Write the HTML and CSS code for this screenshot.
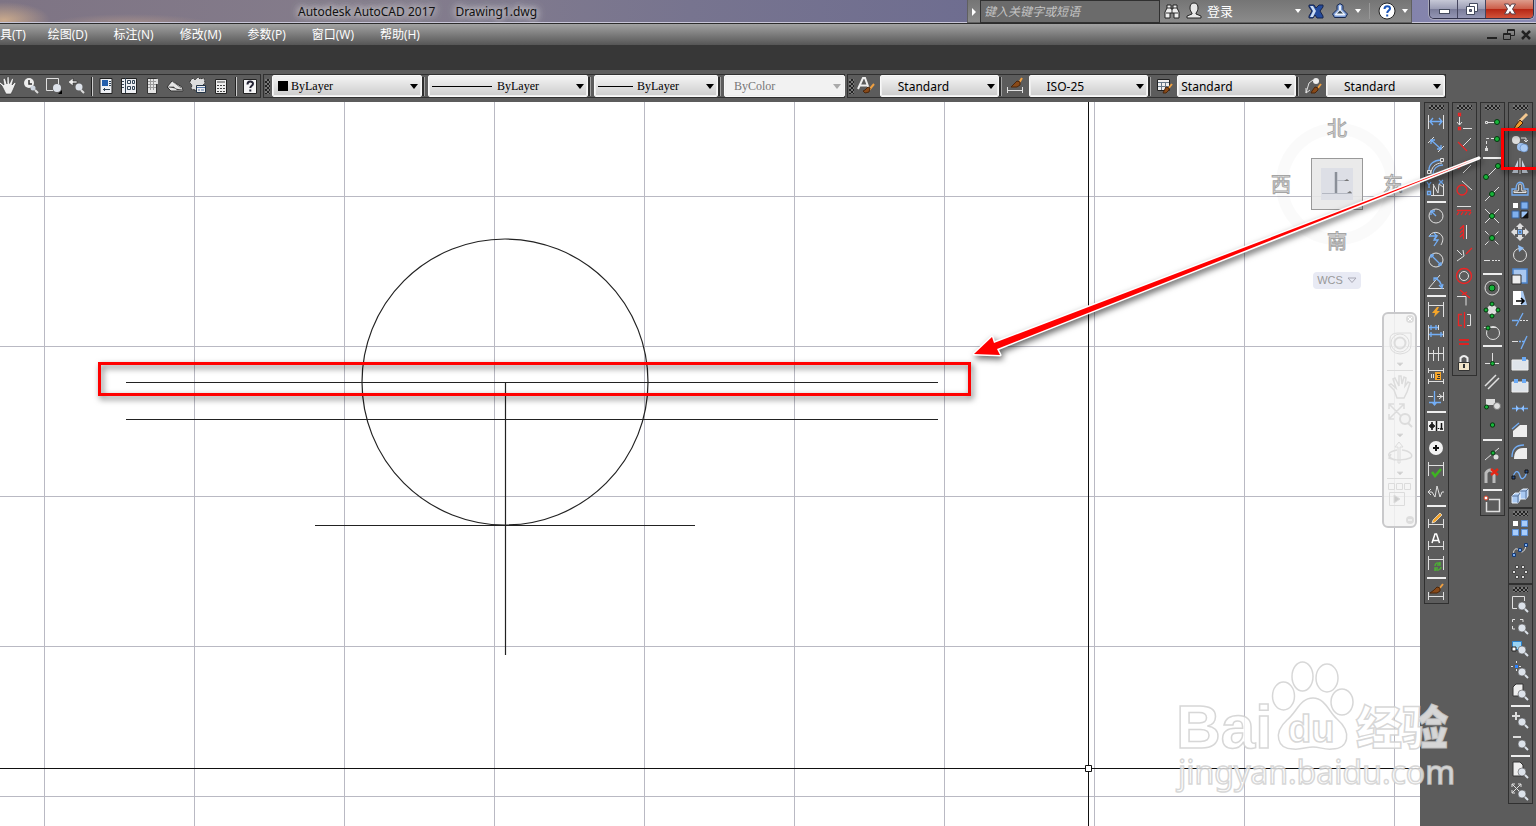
FILE: index.html
```html
<!DOCTYPE html>
<html lang="zh-CN">
<head>
<meta charset="utf-8">
<title>Autodesk AutoCAD 2017 - Drawing1.dwg</title>
<link rel="stylesheet" href="styles.css">
</head>
<body>
<div class="app">
<header class="titlebar">
  <h1 class="title"><span>Autodesk AutoCAD 2017</span><span>Drawing1.dwg</span></h1>
  <div class="infocenter">
    <button class="info-toggle" aria-label="展开"><svg width="12" height="22"><path d="M4 8v8l4-4z" fill="#fff"/></svg></button>
    <input class="search" type="text" aria-label="搜索" placeholder="键入关键字或短语">
    <button class="info-btn" aria-label="查找"><svg width="18" height="18" viewBox="0 0 18 18"><path d="M4 3h4v4h2V3h4v3l2 4v6h-5v-5H7v5H2v-6l2-4z" fill="#eee" stroke="#222"/><path d="M4 6h4M10 6h4M3 11h4M11 11h4M9 7v4" stroke="#333"/></svg></button>
    <button class="info-btn login" aria-label="登录"><svg width="18" height="18" viewBox="0 0 18 18"><path d="M9 1c3 0 4 2 4 5 0 2-1 4-2 5v1l5 2v2H2v-2l5-2v-1C6 10 5 8 5 6c0-3 1-5 4-5z" fill="#e8e8e8" stroke="#222"/></svg><span>登录</span></button>
    <button class="info-btn narrow" aria-label="登录选项"><svg width="6" height="4"><path d="M0 0h6L3 4z" fill="#fff"/></svg></button>
    <button class="info-btn" aria-label="Exchange"><svg width="18" height="18" viewBox="0 0 18 18"><path d="M2 3h5l2 3 3-3h4v2l-3 4 3 5v2h-6l-2-3-2 3H2v-2l3-5-3-4z" fill="#234a9c" stroke="#17244d"/><path d="M3 4h3l3 5-3 6H3l3-6z" fill="#cbdcf4"/></svg></button>
    <button class="info-btn" aria-label="Autodesk 360"><svg width="18" height="18" viewBox="0 0 18 18"><path d="M9 1.500l3 2v4l4.500 4.500-2 3.500h-11l-2-3.500L6 7.500v-4z" fill="#7a9ad4" stroke="#18294e"/><path d="M8 3.500h2V8l4.500 4.500-1 1h-9l-1-1L8 8z" fill="#e9f0fa"/><path d="M9 8.500l3 3H6z" fill="#345"/></svg></button>
    <button class="info-btn narrow" aria-label="Autodesk 360 选项"><svg width="6" height="4"><path d="M0 0h6L3 4z" fill="#fff"/></svg></button>
    <span class="info-div"></span>
    <button class="info-btn" aria-label="帮助"><svg width="18" height="18" viewBox="0 0 18 18"><circle cx="9" cy="9" r="8" fill="#fff" stroke="#222"/><path d="M6.500 7c0-4 5.500-3.500 5.500-.5C12 8.500 9.200 8.500 9.200 11M9.200 12.500v2" stroke="#1c56b8" stroke-width="2" fill="none"/></svg></button>
    <button class="info-btn narrow" aria-label="帮助选项"><svg width="6" height="4"><path d="M0 0h6L3 4z" fill="#fff"/></svg></button>
  </div>
  <div class="winbtns">
    <button aria-label="最小化"><svg width="14" height="14"><rect x="2.500" y="7.500" width="10" height="4" fill="#fff" stroke="#444a5e"/></svg></button>
    <button aria-label="还原"><svg width="14" height="14"><path d="M4.500 1.500h8v8h-8z" fill="#fff" stroke="#444a5e"/><path d="M1.500 4.500h8v8h-8z" fill="#fff" stroke="#444a5e"/><path d="M4.500 7.500h2v2h-2z" fill="#778" stroke="#444a5e"/></svg></button>
    <button class="close" aria-label="关闭"><svg width="14" height="14"><path d="M1.500 2h4L7 4.500 8.500 2h4L9.500 7l3 5h-4L7 9.500 5.500 12h-4l3-5z" fill="#fff" stroke="#5a4048"/></svg></button>
  </div>
</header>
<nav class="menubar">
  <div class="menus">
    <button class="first">具(T)</button><button>绘图(D)</button><button>标注(N)</button><button>修改(M)</button><button>参数(P)</button><button>窗口(W)</button><button>帮助(H)</button>
  </div>
  <div class="docbtns">
    <button aria-label="最小化图形"><svg width="12" height="12"><path d="M1 8h10v2H1z" fill="#222"/></svg></button>
    <button aria-label="还原图形"><svg width="12" height="12"><path d="M4.500 4V.5h7v6H8M.5 4.500h7v6h-7z" fill="none" stroke="#222"/><path d="M4 1.500h8M0 5.500h8" stroke="#222"/></svg></button>
    <button aria-label="关闭图形"><svg width="12" height="12"><path d="M2 2l8 8M10 2l-8 8" stroke="#222" stroke-width="2.500"/></svg></button>
  </div>
</nav>
<div class="ribbon"></div>
<div class="toolbars">
  <div class="bar bar-std">
    <button class="tool" aria-label="平移"><svg class="ic"><path d="M4 10L1 7l1-1 4 3L5 3l2-1 2 6V1l2-.5.5 7L14 2l1.500 1L14 9l3-3 1 1-3 7-2 4H8z" fill="#eee" stroke="#333" stroke-width=".6"/></svg></button>
    <button class="tool" aria-label="实时缩放"><svg class="ic"><circle cx="8" cy="7" r="5" fill="#eee"/><path d="M8 4v4h3" stroke="#333" fill="none" stroke-width="1.500"/><circle cx="12" cy="12" r="2.500" fill="#cdd5e0"/><path d="M14 14l3 3" stroke="#ddd" stroke-width="2"/></svg></button>
    <button class="tool" aria-label="窗口缩放"><svg class="ic"><path class="w" d="M9 14.500H2.500V2.500h12V8"/><circle cx="13" cy="12" r="4" fill="#dde2ea"/><path d="M14 18l4-4v4z" fill="#000"/></svg></button>
    <button class="tool" aria-label="缩放上一个"><svg class="ic"><path d="M1 6l5-4v3h4v2H6v3z" fill="#eee" stroke="#333" stroke-width=".6"/><circle cx="12" cy="11" r="3.500" fill="#dde2ea"/><path d="M14 14l3 3" stroke="#ddd" stroke-width="2"/></svg></button>
    <i class="vsep"></i>
    <button class="tool" aria-label="特性"><svg class="ic"><path d="M4 2.500h12v15H4z" fill="#eef0f4" stroke="#222"/><path d="M6 4h6v6H6z" fill="#235eab"/><path d="M13 5.500h2M13 7.500h2M13 9.500h2M7 13.500h7M8.500 12v3" stroke="#345"/></svg></button>
    <button class="tool" aria-label="设计中心"><svg class="ic"><path d="M2.500 2.500h15v15h-15z" fill="#eef0f4" stroke="#222"/><path d="M6.500 2v15M3 5.500h2M3 8.500h2M3 11.500h2" stroke="#345"/><path class="k" d="M8.500 4.500h3v3h-3zM13.500 4.500h2v3h-2zM8.500 10.500h3v3h-3zM13.500 10.500h2v3h-2z"/></svg></button>
    <button class="tool" aria-label="工具选项板"><svg class="ic"><path d="M5.500 2.500h9v15h-9z" fill="#e4e4e4" stroke="#333"/><path d="M6 5.500h8M6 8.500h8M6 11.500h8M8.500 3v11M11.500 3v11" stroke="#999"/><path d="M14 3h2v5h-2z" fill="#ddd"/></svg></button>
    <button class="tool" aria-label="图纸集"><svg class="ic"><path d="M2 11L7 5l10 6 1 4H6z" fill="#e4e4e4" stroke="#333"/><path d="M3 11h6l3 3h6M7 5l9 7" stroke="#777"/></svg></button>
    <button class="tool" aria-label="标记集"><svg class="ic"><path d="M2 5l3-3 2 2 3-3 2 2 4-1 1 5-2 2v5H7l-4-1 1-4-2-2z" fill="#ddd" stroke="#333" stroke-dasharray="2 1"/><path d="M8.500 9.500h9v7h-9z" fill="#eee" stroke="#234"/><path d="M9 11.500h8M10 14h2M13 14h3" stroke="#57a"/></svg></button>
    <button class="tool" aria-label="计算器"><svg class="ic"><path d="M4.500 3.500h11v14h-11z" fill="#eee" stroke="#222"/><path d="M6 6h8M6 9.500h2M9 9.500h2M12 9.500h2M6 12.500h2M9 12.500h2M12 12.500h2M6 15.500h2M9 15.500h2M12 15.500h2" stroke="#444"/></svg></button>
    <i class="vsep"></i>
    <button class="tool" aria-label="帮助主题"><svg class="ic"><path d="M3.500 3.500h13v14h-13z" fill="#f4f4f6" stroke="#222"/><path d="M7.500 8.500c0-4 5.500-3.500 5.500-.8 0 2-2.700 2-2.700 4.300M10.300 13.500v2" fill="none" stroke="#223" stroke-width="2"/></svg></button>
  </div>
  <div class="bar bar-props">
    <i class="vgrip"></i>
    <div class="combo c150"><select class="swatch" aria-label="颜色"><option>ByLayer</option></select><i class="chip"></i></div>
    <i class="vsep"></i>
    <div class="combo c160"><select class="serif l1" aria-label="线型"><option>ByLayer</option></select><i class="stroke s60"></i></div>
    <i class="vsep"></i>
    <div class="combo c124"><select class="serif l2" aria-label="线宽"><option>ByLayer</option></select><i class="stroke s35"></i></div>
    <i class="vsep"></i>
    <div class="combo c120 off"><select class="serif" aria-label="打印样式" disabled><option>ByColor</option></select></div>
  </div>
  <div class="bar bar-styles">
    <i class="vgrip"></i>
    <button class="tool" aria-label="文字样式"><svg class="ic"><path d="M2 13L7 2h2l4 11M4 9.500h7" fill="none" stroke="#eee" stroke-width="2"/><path d="M18 8l-5 6" stroke="#f0a040" stroke-width="2"/><path d="M14 12l-2-1-3 3-2 1 2 2 4-1z" fill="#8a4a18" stroke="#4b260b"/></svg></button>
    <div class="combo c118"><select class="indent" aria-label="文字样式列表"><option>Standard</option></select></div>
    <i class="vsep"></i>
    <button class="tool" aria-label="标注样式"><svg class="ic"><path class="w" d="M2.500 11v6M17.500 11v6M3 14.500h14"/><path d="M17 2l-3 5" stroke="#f0a040" stroke-width="2"/><path d="M15 6l-3-1-3 3-3 3h6l3-2z" fill="#8a4a18" stroke="#4b260b"/></svg></button>
    <div class="combo c118"><select class="indent" aria-label="标注样式列表"><option>ISO-25</option></select></div>
    <i class="vsep"></i>
    <button class="tool" aria-label="表格样式"><svg class="ic"><path d="M3.500 3.500h12v11h-12z" fill="#eee" stroke="#222"/><path d="M4 6.500h11M4 10.500h11M7.500 6v8M11.500 6v8" stroke="#678"/><path d="M18 8l-4 5" stroke="#f0a040" stroke-width="2"/><path d="M15 12l-3-1-2 4-1 2h3l3-3z" fill="#8a4a18" stroke="#4b260b"/></svg></button>
    <div class="combo c118"><select aria-label="表格样式列表"><option>Standard</option></select></div>
    <i class="vsep"></i>
    <button class="tool" aria-label="多重引线样式"><svg class="ic"><path class="w" d="M3 17L6 7l4-3M3 12v5l4-3"/><circle cx="13" cy="5" r="3" fill="#eee"/><path d="M18 8l-4 5" stroke="#f0a040" stroke-width="2"/><path d="M15 12l-3-1-3 4-1 2h4l3-3z" fill="#8a4a18" stroke="#4b260b"/></svg></button>
    <div class="combo c118"><select class="indent" aria-label="多重引线样式列表"><option>Standard</option></select></div>
  </div>
</div>
<main class="workspace">
  <section class="canvas" aria-label="绘图区">
    <svg class="drawing">
      <defs><pattern id="grid" x="44" y="94" width="150" height="150" patternUnits="userSpaceOnUse"><path d="M.5 0v150M0 .5h150" stroke="#b9b9c3"/></pattern></defs>
      <rect width="100%" height="100%" fill="url(#grid)"/>
      <g fill="none" stroke="#222" stroke-width="1.200">
        <circle cx="505" cy="280" r="143"/>
        <path d="M126 280.500h812M126 317.500h812M315 423.500h380M505.500 280v273"/>
      </g>
      <path d="M1088.500 0V663M1088.500 670V900M0 666.500h1085M1092 666.500h900M1085.500 663.500h6v6h-6z" fill="none" stroke="#111"/>
    </svg>
    <div class="viewcube">
      <svg width="140" height="140" viewBox="0 0 140 140">
        <circle cx="70" cy="70" r="55" fill="none" stroke="#000" stroke-opacity=".02" stroke-width="12"/>
        <rect x="44.500" y="44.500" width="51" height="51" fill="#e8e8e8" fill-opacity=".9" stroke="#999"/>
        <rect x="54" y="54" width="32" height="32" fill="#dddfe6"/>
        <path d="M69 58v21" stroke="#8a8f98" stroke-width="2.500"/><path d="M55 79.500h30M70 66.500h12" stroke="#b4b8c2"/><path d="M77 67l3-2 2 2zM80 79l3-2 2 2z" fill="#777"/>
        <g class="compass"><text x="70" y="22">北</text><text x="14" y="78">西</text><text x="126" y="78">东</text><text x="70" y="135">南</text></g>
      </svg>
      <button class="wcs">WCS <svg width="10" height="7"><path d="M1 1h8L5 5.500z" fill="none" stroke="#a8a8b4"/></svg></button>
    </div>
    <div class="navbar">
      <svg width="32" height="212" viewBox="0 0 32 212" fill="none" stroke="#dcdcdc">
        <circle cx="26" cy="5" r="4" fill="#ddd" stroke="none"/><path d="M24 3l4 4M28 3l-4 4" stroke="#fff"/>
        <path d="M6 25q0-6 8-6h13v12q0 8-11 9-10-1-10-9z"/><circle cx="16" cy="29" r="5.500" stroke-width="2"/><circle cx="16" cy="29" r="9"/>
        <path d="M13 49h6l-3 3z" fill="#ccc"/><path d="M3 56.500h26"/>
        <path d="M10 76l-5-5 2-1 5 4-3-9 2-1 4 8V62h2l1 8 2-7 2 1-1 8 3-4 2 1-3 9-3 6h-7z" stroke-width="1.500"/>
        <path d="M5 90l15 15M20 90l-15 15M5 95v-5h5M15 90h5v5M5 100v5h5" stroke-width="1.500"/><circle cx="21" cy="105" r="5" fill="#f3f3f3" stroke-width="2"/><path d="M24 109l4 4" stroke-width="2"/><path d="M13 120h6l-3 3z" fill="#ccc"/>
        <path d="M14 149v-16h-3l4-5 4 5h-3v16z"/><path d="M13 136c-9 2-10 5-6 8s15 2 19 0 1-7-8-8M7 140l-2 4 6 2" stroke-width="1.500"/>
        <path d="M13 158h6l-3 3z" fill="#ccc"/><path d="M3 164.500h26M4.500 169.500h6v6h-6zM12.500 169.500h6v6h-6zM20.500 169.500h6v6h-6zM5.500 178.500h15v13h-15z"/><path d="M10 181v8l6-4z" fill="#ccc"/>
        <circle cx="26" cy="206" r="4" fill="#ddd" stroke="none"/><path d="M24 206h4" stroke="#fff"/>
      </svg>
    </div>
  </section>
  <aside class="dock">
    <div class="dockcol"><div class="palette"><i class="hgrip"></i>
      <button class="tool" aria-label="线性标注"><svg class="ic"><path class="w" d="M2.500 3v14M17.500 3v14"/><path class="b" d="M4 9.500h12M7 6L4 9.500 7 13M13 6l3 3.500L13 13"/></svg></button>
      <button class="tool" aria-label="对齐标注"><svg class="ic"><path class="w" d="M2 9l6-6M12 18l6-6"/><path class="b" d="M5 6l10 9M5 10V6h4M11 15h4v-4"/></svg></button>
      <button class="tool" aria-label="弧长标注"><svg class="ic"><path class="b" d="M3 14C3 8 8 4 15 4M7 18c0-5 4-9 10-9"/><path class="w" d="M1.500 14.500h3v3h-3zM14.500 2.500h3v3h-3zM5 18C5 12 9 7 16 7"/></svg></button>
      <button class="tool" aria-label="坐标标注"><svg class="ic"><path class="w" d="M7.500 6v11M17.500 6v11M5 17.500h13M7 6l5 9 1-9 4 3"/><path class="b" d="M1 4l2 3 2-3M3 7v3M13 2l4 4M17 2l-4 4M1.500 13.500h3v3h-3z"/></svg></button>
      <i class="hsep"></i>
      <button class="tool" aria-label="半径标注"><svg class="ic"><circle class="w" cx="10" cy="10" r="7"/><path class="b" d="M5 5l5 5M5 9V5h4"/></svg></button>
      <button class="tool" aria-label="折弯标注"><svg class="ic"><path class="w" d="M3 9C5 3 13 3 16 8c2 3 0 7-1 9"/><path class="b" d="M3 8h8l-3 4h4l-4 6M8 5l3 3-3 3"/></svg></button>
      <button class="tool" aria-label="直径标注"><svg class="ic"><circle class="w" cx="10" cy="10" r="7"/><path class="b" d="M5 5l10 10M5 8V5h3M12 15h3v-3"/></svg></button>
      <button class="tool" aria-label="角度标注"><svg class="ic"><path class="w" d="M14 3L2.500 16.500H18"/><path class="b" d="M8 6c5 1 7 4 8 10M8 9V6h4M13 13l3 3 1-4"/></svg></button>
      <i class="hsep"></i>
      <button class="tool" aria-label="快速标注"><svg class="ic"><path class="w" d="M2.500 2v15M17.500 2v15M3 5.500h14"/><path d="M11 7l-5 6h3l-1 4 6-6h-3l2-4z" fill="#f5a52a"/></svg></button>
      <button class="tool" aria-label="基线标注"><svg class="ic"><path class="w" d="M2.500 3v15M12.500 3v5M17.500 9v6"/><path class="b" d="M3 5.500h9M3 12.500h14M5 3v5M10 3v5M5 10v5M15 10v5"/></svg></button>
      <button class="tool" aria-label="连续标注"><svg class="ic"><path class="w" d="M2.500 3v14M7.500 6v11M12.500 3v14M17.500 3v14M3 9.500h14"/></svg></button>
      <button class="tool" aria-label="等距标注"><svg class="ic"><path class="w" d="M2.500 2v5M17.500 2v5M3 4.500h14M2.500 13v5M17.500 13v5M3 15.500h14M5.500 8v4M7.500 8v4"/><path d="M9 6h6v8H9z" fill="#f5a52a"/><path d="M11 8.500h3M12 10.500h2M11 12.500h3" stroke="#333"/></svg></button>
      <button class="tool" aria-label="折断标注"><svg class="ic"><path class="w" d="M2 8.500h5M11 8.500h6M13 6l3 2.500-3 2.500M17.500 4v9"/><path class="b" d="M8.500 3v14M3 14.500h12M6 14l2.500 3 2.500-3"/></svg></button>
      <i class="hsep"></i>
      <button class="tool" aria-label="公差"><svg class="ic"><path d="M2 5h16v10H2z" fill="#eee"/><path d="M10.500 5v10M6 6v8M3 10h6M15.500 7v6M14 13h3M12.500 12v1" stroke="#111" stroke-width="1.500"/><circle cx="6" cy="10" r="2" stroke="#111" fill="none"/></svg></button>
      <button class="tool" aria-label="圆心标记"><svg class="ic"><circle cx="10" cy="10" r="7" fill="#f2f2f2"/><path d="M7 10h6M10 7v6" stroke="#111" stroke-width="2"/></svg></button>
      <button class="tool" aria-label="检验"><svg class="ic"><path class="w" d="M2.500 2v14M17.500 2v14M3 5.500h14"/><path d="M6 12l3 4 6-7" fill="none" stroke="#3db521" stroke-width="2.500"/></svg></button>
      <button class="tool" aria-label="折弯线性"><svg class="ic"><path class="w" d="M2 10h4l3 5 2-11 3 11 2-5h2M5 7l-3 3 3 3"/></svg></button>
      <i class="hsep"></i>
      <button class="tool" aria-label="编辑标注"><svg class="ic"><path class="w" d="M2.500 9v9M17.500 9v9M3 14.500h14"/><path d="M7 10l7-7 2 2-7 7-3 1z" fill="#f5a52a" stroke="#fff" stroke-width=".6"/></svg></button>
      <button class="tool" aria-label="编辑标注文字"><svg class="ic"><path class="w" d="M2.500 9v9M17.500 9v9M3 14.500h14"/><path d="M6 11l3-9h1.500l3 9M7 8.500h6" fill="none" stroke="#fff" stroke-width="1.500"/></svg></button>
      <button class="tool" aria-label="标注更新"><svg class="ic"><path class="w" d="M2.500 2v14M17.500 2v14M3 5.500h14"/><path d="M14 10c-2-2-5-1-5 2M9 15c2 2 6 1 6-2M14 8v3h-3M9 17v-3h3" fill="none" stroke="#4caf35" stroke-width="1.500"/></svg></button>
      <i class="hsep"></i>
      <button class="tool" aria-label="标注样式管理"><svg class="ic"><path class="w" d="M2.500 10v8M17.500 10v8M3 14.500h14"/><path d="M17 2l-4 5" stroke="#f0a040" stroke-width="2"/><path d="M14 6l-3-1-3 3-4 3h7l3-2z" fill="#8a4a18" stroke="#4b260b"/></svg></button>
    </div></div>
    <div class="dockcol"><div class="palette"><i class="hgrip"></i>
      <button class="tool" aria-label="重合"><svg class="ic"><path class="r" d="M4.500 1.500h2v2h-2zM4.500 15.500h2v2h-2z"/><path class="w" d="M5.500 5v8M3 10l2.500 3L8 10M9 16.500h9"/></svg></button>
      <button class="tool" aria-label="垂直"><svg class="ic"><path class="r" d="M4 8l9 9"/><path class="w" d="M9 12l8-8"/></svg></button>
      <button class="tool" aria-label="平行"><svg class="ic"><path class="r" d="M4 13l8-8"/><path class="w" d="M9 17l8-8"/></svg></button>
      <button class="tool" aria-label="相切"><svg class="ic"><circle class="r" cx="8" cy="12" r="5"/><path class="w" d="M8 3l10 9"/></svg></button>
      <button class="tool" aria-label="水平"><svg class="ic"><path class="w" d="M3 6.500h14"/><path class="r" d="M3 10.500h14M5 12l-2 3M9 12l-2 3M13 12l-2 3M17 12l-2 3"/></svg></button>
      <button class="tool" aria-label="竖直"><svg class="ic"><path class="w" d="M12.500 3v14"/><path class="r" d="M9.500 3v14M9 4L6 7M9 8l-3 3M9 12l-3 3"/></svg></button>
      <button class="tool" aria-label="共线"><svg class="ic"><path class="w" d="M3 6l5 5M9 6l1 6M3 17l7-5"/><path class="r" d="M12 10l6-6"/></svg></button>
      <button class="tool" aria-label="同心"><svg class="ic"><circle class="r" cx="10" cy="10" r="7.500"/><circle class="w" cx="10" cy="10" r="4.500"/></svg></button>
      <button class="tool" aria-label="平滑"><svg class="ic"><path class="r" d="M6 2l10 8M8 7l5-3"/><path class="w" d="M3 8.500h9v9"/></svg></button>
      <button class="tool" aria-label="对称"><svg class="ic"><path class="r" d="M8 4.500H4.500v11H8M10.500 2v16"/><path class="w" d="M13 4.500h3.500v11H13"/></svg></button>
      <button class="tool" aria-label="相等"><svg class="ic"><path d="M5 8h10M5 12h10" stroke="#d22" stroke-width="2"/></svg></button>
      <button class="tool" aria-label="固定"><svg class="ic"><path d="M6.500 9V4q3.500-4 7 0v5" fill="none" stroke="#eee" stroke-width="2"/><path d="M4.500 8.500h11v8h-11z" fill="#f1e4c8" stroke="#333"/><path d="M10 10v4" stroke="#333" stroke-width="2"/></svg></button>
    </div></div>
    <div class="dockcol"><div class="palette"><i class="hgrip"></i>
      <button class="tool" aria-label="临时追踪点"><svg class="ic"><path class="w" d="M3.500 9.500h2v2h-2zM6 10.500h7"/><circle class="g" cx="15" cy="10" r="2.500"/></svg></button>
      <button class="tool" aria-label="捕捉自"><svg class="ic"><path class="w" d="M4.500 15V4.500H12" stroke-dasharray="3 2"/><path d="M3 14h3v3H3z" fill="#ddd"/><circle class="g" cx="15" cy="5" r="2.500"/></svg></button>
      <i class="hsep"></i>
      <button class="tool" aria-label="捕捉到端点"><svg class="ic"><path class="w" d="M5 15L16 4"/><circle class="g" cx="4" cy="15" r="2.500"/><circle class="g" cx="16" cy="4" r="2.500"/></svg></button>
      <button class="tool" aria-label="捕捉到中点"><svg class="ic"><path class="w" d="M3 17L17 3"/><circle class="g" cx="10" cy="10" r="2.500"/></svg></button>
      <button class="tool" aria-label="捕捉到交点"><svg class="ic"><path class="w" d="M3 3l14 14M3 17L17 3"/><circle class="g" cx="10" cy="10" r="2.500"/></svg></button>
      <button class="tool" aria-label="捕捉到外观交点"><svg class="ic"><path class="w" d="M3 3l14 14M3 17L17 3" stroke-dasharray="5 2"/><circle class="g" cx="10" cy="10" r="2.500"/></svg></button>
      <button class="tool" aria-label="捕捉到延长线"><svg class="ic"><path class="w" d="M2 10.500h6M10 10.500h2M13 10.500h2M16 10.500h2"/></svg></button>
      <i class="hsep"></i>
      <button class="tool" aria-label="捕捉到圆心"><svg class="ic"><circle class="w" cx="10" cy="10" r="7"/><circle class="g" cx="10" cy="10" r="3"/></svg></button>
      <button class="tool" aria-label="捕捉到象限点"><svg class="ic"><circle cx="10" cy="10" r="5" fill="#ddd"/><circle class="g" cx="10" cy="4" r="2"/><circle class="g" cx="10" cy="16" r="2"/><circle class="g" cx="4" cy="10" r="2"/><circle class="g" cx="16" cy="10" r="2"/></svg></button>
      <button class="tool" aria-label="捕捉到切点"><svg class="ic"><circle class="w" cx="11" cy="11" r="6.500"/><path class="w" d="M2 5.500h12"/><circle class="g" cx="6" cy="6" r="2"/></svg></button>
      <i class="hsep"></i>
      <button class="tool" aria-label="捕捉到垂足"><svg class="ic"><path class="w" d="M10.500 3v10M3 13.500h14"/><circle class="g" cx="10.500" cy="13.500" r="2"/></svg></button>
      <button class="tool" aria-label="捕捉到平行线"><svg class="ic"><path class="w" d="M3 14L14 3M6 17L17 6" stroke-width="1.500"/></svg></button>
      <button class="tool" aria-label="捕捉到插入点"><svg class="ic"><path d="M4 5h9v6H4z" fill="#ddd"/><circle cx="15" cy="12" r="3.500" fill="#ddd" stroke="#777"/><circle class="g" cx="4.500" cy="13" r="2"/></svg></button>
      <button class="tool" aria-label="捕捉到节点"><svg class="ic"><circle class="g" cx="10.500" cy="9" r="2.200"/></svg></button>
      <i class="hsep"></i>
      <button class="tool" aria-label="捕捉到最近点"><svg class="ic"><path class="w" d="M3 16L17 4"/><circle class="g" cx="11" cy="9" r="2"/><circle cx="14" cy="13" r="2.500" fill="#ddd"/></svg></button>
      <button class="tool" aria-label="无捕捉"><svg class="ic"><path d="M4 17V7q4-6 8 0v10" fill="none" stroke="#bbb" stroke-width="3"/><path d="M9 3l7 6M16 3L9 9" stroke="#e32615" stroke-width="2.500"/></svg></button>
      <i class="hsep"></i>
      <button class="tool" aria-label="对象捕捉设置"><svg class="ic"><path class="w" d="M4.500 8v9.500h13v-12H7" stroke-width="1.500"/><circle cx="4" cy="4" r="2" fill="#fff" stroke="#d43b20"/></svg></button>
    </div></div>
    <div class="dockcol">
    <div class="palette"><i class="hgrip"></i>
      <button class="tool" aria-label="特性匹配"><svg class="ic"><path d="M17 2l-8 8" stroke="#f4c890" stroke-width="3"/><path d="M10 8l3 3-5 5-4 1 2-4z" fill="#f0a030" stroke="#40200c"/></svg></button>
      <button class="tool" aria-label="复制"><svg class="ic"><circle cx="6" cy="6" r="4" fill="#ddd"/><circle cx="11" cy="13" r="4" fill="#9fc1ee"/><circle cx="14" cy="14" r="4" fill="#a9c9f2" stroke="#5d86bf" stroke-width=".6"/><path class="w" d="M11 4h5v4M14 6l2 2 2-2"/></svg></button>
      <button class="tool" aria-label="镜像"><svg class="ic"><path d="M8 4v13H2zM12 4v13h6z" fill="#ccd7e4"/><path class="w" d="M10 2v16"/></svg></button>
      <button class="tool" aria-label="偏移"><svg class="ic"><path class="b" d="M2 17v-6h4c0-9 8-9 8 0h4v6z"/><path class="w" d="M4 14.500V13h4c2-2-1-7 2-7s1 5 2 7h4v1.500z"/></svg></button>
      <button class="tool" aria-label="阵列"><svg class="ic"><path d="M3 3h5v5H3z" fill="#fff"/><path d="M11 2h7v7h-7zM2 11h7v7H2z" fill="#7fb0ee" stroke="#39639c"/><path d="M11 11h7v7h-7z" fill="#9bc4f6" stroke="#222"/><path d="M18 12v6h-6z" fill="#111"/></svg></button>
      <button class="tool" aria-label="移动"><svg class="ic"><path class="b" d="M8.500 8.500h3v3h-3z" stroke-width="1.500"/><path d="M10 1l4 4h-2v2H8V5H6zM10 19l4-4h-2v-2H8v2H6zM1 10l4-4v2h2v4H5v2zM19 10l-4-4v2h-2v4h2v2z" fill="#ddd"/></svg></button>
      <button class="tool" aria-label="旋转"><svg class="ic"><circle class="w" cx="10" cy="11" r="6.500"/><path d="M8 1l6 3-5 4z" fill="#8fbdf5"/></svg></button>
      <button class="tool" aria-label="缩放"><svg class="ic"><path d="M3 3h14v14H3z" fill="#aac8ef" stroke="#4c84cc" stroke-width="1.500"/><path d="M2 9h9v9H2z" fill="#eee" stroke="#333"/></svg></button>
      <button class="tool" aria-label="拉伸"><svg class="ic"><path d="M3 3h8v14H3z" fill="#fff"/><path d="M11 3h2l4 14h-6z" fill="#a9c9f2"/><path d="M6 13h7M11 10l3 3-3 3" stroke="#000" stroke-width="1.500" fill="none"/></svg></button>
      <button class="tool" aria-label="修剪"><svg class="ic"><path class="b" d="M6 16l7-13M2 10.500h6"/><path class="w" d="M10 10.500h8" stroke-dasharray="2 1"/></svg></button>
      <button class="tool" aria-label="延伸"><svg class="ic"><path class="b" d="M11 17l6-13"/><path class="w" d="M2 9.500h6"/><path class="b" d="M9 9.500h5" stroke-dasharray="2 1"/></svg></button>
      <button class="tool" aria-label="打断于点"><svg class="ic"><path d="M2 6h16v10H2z" fill="#dfe4ea" stroke="#eee"/><path d="M12 3h4v4h-4z" fill="#6baaf5"/></svg></button>
      <button class="tool" aria-label="打断"><svg class="ic"><path d="M2 6h16v10H2z" fill="#dfe4ea" stroke="#eee"/><path d="M4 3h4v4H4zM12 3h4v4h-4z" fill="#6baaf5"/></svg></button>
      <button class="tool" aria-label="合并"><svg class="ic"><path d="M2 10.500h16" stroke="#6baaf5" stroke-width="1.500"/><path d="M6 7l3 3.500L6 14zM14 7l-3 3.500 3 3.500z" fill="#8fc0ff"/></svg></button>
      <button class="tool" aria-label="倒角"><svg class="ic"><path d="M3 17v-6l7-6h7v12z" fill="#eee"/><path class="b" d="M2 9l7-6" stroke-width="1.500"/></svg></button>
      <button class="tool" aria-label="圆角"><svg class="ic"><path d="M4 17c0-7 3-11 9-11h4v11z" fill="#eee"/><path class="b" d="M2 15C2 7 6 3 14 3" stroke-width="1.500"/></svg></button>
      <button class="tool" aria-label="光顺曲线"><svg class="ic"><path class="b" d="M3 13c3-9 6-5 7-1s5 4 7-5" stroke-width="1.500"/><path d="M2 12h3v3H2zM15 6h3v3h-3z" fill="#274c87" stroke="#111"/></svg></button>
      <button class="tool" aria-label="分解"><svg class="ic"><path d="M2 10l3-3h5v7l-2 3H2zM10 5l3-2h5v7l-2 3h-6z" fill="#a9c9f2" stroke="#e8f0fa"/><path d="M2 10h6v7M8 10l2-3M10 5h6v8M16 5l2-2" fill="none" stroke="#58739a"/></svg></button>
    </div>
    <div class="palette"><i class="hgrip"></i>
      <button class="tool" aria-label="编辑阵列"><svg class="ic"><path d="M3 3h5v5H3z" fill="#fff"/><path d="M11.500 2.500h6v6h-6zM2.500 11.500h6v6h-6zM11.500 11.500h6v6h-6z" fill="#a9cdfb" stroke="#5c91d8"/></svg></button>
      <button class="tool" aria-label="编辑样条曲线"><svg class="ic"><path class="w" d="M3 15c1-8 4-7 7-4s6-2 6-7"/><path class="n" d="M2.500 13.500h3v3h-3zM8.500 8.500h3v3h-3zM14.500 3.500h3v3h-3z"/></svg></button>
      <button class="tool" aria-label="编辑多段线"><svg class="ic"><path class="lt" d="M5.500 3.500h3v3h-3zM11.500 3.500h3v3h-3zM2.500 8.500h3v3h-3zM14.500 8.500h3v3h-3zM5.500 13.500h3v3h-3zM11.500 13.500h3v3h-3z"/></svg></button>
    </div>
    <div class="palette"><i class="hgrip"></i>
      <button class="tool" aria-label="窗口"><svg class="ic"><path class="w" d="M7 14.500H2.500V2.500h12V7"/><circle class="lens" cx="12" cy="12" r="4"/><path class="hd" d="M15 15l3 3"/></svg></button>
      <button class="tool" aria-label="动态缩放"><svg class="ic"><path class="w" d="M2.500 6V3.500H5M10 3.500h3V6M2.500 10v3H5"/><circle class="lens" cx="12" cy="12" r="4"/><path class="hd" d="M15 15l3 3"/></svg></button>
      <button class="tool" aria-label="比例缩放"><svg class="ic"><path d="M2.500 3.500h9v8h-9z" fill="#9bd4f5" stroke="#2b83cf"/><path d="M2 9h4v4H2z" fill="#fff" stroke="#222"/><circle class="lens" cx="12" cy="12" r="4"/><path class="hd" d="M15 15l3 3"/></svg></button>
      <button class="tool" aria-label="中心缩放"><svg class="ic"><path d="M5 5h3v3H5z" fill="#2b83ff"/><path class="w" d="M6.500 1v3M6.500 9v3M1 6.500h3M9 6.500h3" stroke-dasharray="2 1"/><circle class="lens" cx="12" cy="12" r="4"/><path class="hd" d="M15 15l3 3"/></svg></button>
      <button class="tool" aria-label="缩放对象"><svg class="ic"><path d="M3 5l3-3h7v9l-3 3H3z" fill="#eee" stroke="#333"/><circle class="lens" cx="12" cy="12" r="4"/><path class="hd" d="M15 15l3 3"/></svg></button>
      <i class="hsep"></i>
      <button class="tool" aria-label="放大"><svg class="ic"><path d="M6 2v8M2 6h8" stroke="#ddd" stroke-width="2"/><circle class="lens" cx="12" cy="12" r="4"/><path class="hd" d="M15 15l3 3"/></svg></button>
      <button class="tool" aria-label="缩小"><svg class="ic"><path d="M3 5h8" stroke="#ddd" stroke-width="2"/><circle class="lens" cx="12" cy="12" r="4"/><path class="hd" d="M15 15l3 3"/></svg></button>
      <i class="hsep"></i>
      <button class="tool" aria-label="全部缩放"><svg class="ic"><path d="M3 2h7l3 3v11H3z" fill="#eee" stroke="#333"/><circle class="lens" cx="12" cy="12" r="4"/><path class="hd" d="M15 15l3 3"/></svg></button>
      <button class="tool" aria-label="范围缩放"><svg class="ic"><path class="w" d="M2 2l9 9M11 2l-9 9M2 5V2h3M8 2h3v3M2 8v3h3"/><circle class="lens" cx="12" cy="12" r="4"/><path class="hd" d="M15 15l3 3"/></svg></button>
    </div>
    </div>
  </aside>
  <svg class="overlay" aria-hidden="true">
    <g class="mark">
      <ellipse cx="1283.500" cy="594" rx="11" ry="14"/><ellipse cx="1302.500" cy="574.500" rx="10.500" ry="14.500"/><ellipse cx="1327" cy="576" rx="11" ry="14"/><ellipse cx="1342" cy="600" rx="11" ry="13"/>
      <path d="M1313 596c12 0 16 14 24 21 15 13 12 30-5 30-7 1-12-2-19-2s-12 3-20 2c-16 0-20-16-6-29 10-8 13-22 26-22z"/>
      <text class="bai" x="1176" y="646">Bai</text><text class="du" x="1288" y="640">du</text><text class="jy" x="1356" y="642">经验</text><text class="url" x="1178" y="682">jingyan.baidu.com</text>
    </g>
    <g class="redline">
      <path d="M99.500 261.500h870v31h-870zM1545 27.500h-42.500v39H1545" fill="none" stroke="#f00" stroke-width="3"/>
      <path d="M974 252l18-17 2 6L1479 56 997 247l3 6z" fill="#f00" stroke="#fff" stroke-width="3" stroke-linejoin="round" paint-order="stroke"/>
    </g>
  </svg>
</main>
</div>
</body>
</html>
```
FILE: styles.css
```css
* { box-sizing: border-box; }
body { margin: 0; font: 12px/16px "Open Sans", "Noto Sans CJK SC", sans-serif; }
button { appearance: none; border: 0; padding: 0; margin: 0; background: none; color: inherit; font: inherit; }
svg { display: block; }
.app { display: flex; flex-direction: column; height: 100vh; overflow: hidden; background: #5c5c5c; }

.titlebar {
  display: flex; flex: none; height: 24px; overflow: hidden;
  background:
    radial-gradient(ellipse 46px 18px at 4px 20px, #c9a98c, transparent),
    radial-gradient(ellipse 80px 10px at 130px 24px, #a58f8b, transparent),
    linear-gradient(90deg, #7e7484, #857d8c 25%, #77748f 45%, #6e6d90 64%, #8a8ab4);
  border-bottom: 1px solid #2c2c2c;
  box-shadow: inset 0 -1px #c8c6d8;
}
.title { display: flex; gap: 20px; margin: 0 auto 0 298px; font: 12px/24px "Noto Sans", sans-serif; color: #111; text-shadow: 0 0 6px #ddd, 0 0 8px #ccc, 0 0 10px #ccc; }
.infocenter { display: flex; align-items: center; width: 445px; background: linear-gradient(#757575, #8b8b8b); border: 1px solid #606060; border-top: 0; }
.info-toggle { width: 12px; }
.search { width: 180px; height: 23px; padding: 0 3px; border: 1px solid #303030; background: #6b6b6b; color: #fff; font: italic 12px "Open Sans", "Noto Sans CJK SC", sans-serif; }
.search::placeholder { color: #c4c4c4; }
.info-btn { display: flex; align-items: center; justify-content: center; gap: 4px; width: 24px; color: #fff; }
.info-btn.login { width: 50px; margin-right: auto; font-size: 13px; }
.info-btn.narrow { width: 12px; }
.info-div { width: 1px; height: 16px; margin: 0 5px; background: #999; }
.winbtns { display: flex; margin: 0 2px 0 17px; height: 19px; border: 1px solid #31314a; border-top: 0; border-radius: 0 0 5px 5px; overflow: hidden; box-shadow: 0 0 0 1px #aab; }
.winbtns button { display: flex; align-items: center; justify-content: center; width: 28px; background: linear-gradient(#c6c8d6, #9a9cb4 50%, #797b98 50%, #9496b4); border-right: 1px solid #45455e; }
.winbtns .close { width: 47px; border: 0; background: linear-gradient(#dd9c8c, #cc5c48 50%, #b52513 50%, #d2533a); }

.menubar { display: flex; justify-content: space-between; flex: none; height: 21px; overflow: hidden; background: linear-gradient(#a2a2a2, #565656); color: #fff; }
.menus { display: flex; }
.menus button { padding: 0 13px; line-height: 20px; }
.menus .first { padding: 0 9px 0 0; }
.docbtns { display: flex; align-items: center; gap: 5px; padding-right: 4px; }
.ribbon { flex: none; height: 25px; background: #373737; }

.toolbars { display: flex; align-items: flex-start; gap: 2px; flex: none; height: 32px; padding-top: 4px; overflow: hidden; }
.bar { display: flex; align-items: center; flex: none; height: 24px; border: 1px solid #303030; }
.bar-std { margin-left: -4px; width: 265px; }
.bar-props { width: 582px; }
.bar-styles { width: 599px; }
.tool { display: flex; align-items: center; justify-content: center; flex: none; width: 23px; height: 22px; padding-right: 1px; }
.bar-styles .tool { flex: 1; min-width: 0; padding-right: 3px; }
.ic { width: 20px; height: 20px; flex: none; }
.vsep { width: 6px; height: 19px; flex: none; background: linear-gradient(90deg, #2e2e2e 2px, #a0a0a0 2px 3px, transparent 3px); }
.bar-std .vsep { background: linear-gradient(90deg, transparent 2px, #222 2px 3px, #ccc 3px 4px, transparent 4px); }
.vgrip { width: 5px; height: 15px; margin: 0 2px 0 1px; flex: none; background: repeating-conic-gradient(#222 0 25%, #777 0 50%) 0 0 / 4px 4px; }
.combo { position: relative; flex: none; height: 22px; }
.combo select { appearance: none; width: 100%; height: 22px; padding: 0 16px 0 3px; border: 1px solid #f8f8f8; border-radius: 2px; background: linear-gradient(#f4f4f4, #ccc); color: #000; font: 12px "Noto Sans", sans-serif; box-shadow: inset 0 0 0 1px #eee; opacity: 1; }
.combo::after { content: ""; position: absolute; right: 4px; top: 9px; border: 4px solid transparent; border-top: 5px solid #000; border-bottom: 0; pointer-events: none; }
.combo.off::after { border-top-color: #aaa; }
.combo.off select { color: #777; background: #f2f2f2; padding-left: 9px; }
.combo select.serif, .combo select.swatch { font-family: "Liberation Serif", serif; }
.combo select.swatch { padding-left: 18px; }
.combo select.l1 { padding-left: 68px; }
.combo select.l2 { padding-left: 42px; }
.combo select.indent { padding-left: 17px; }
.c150 { width: 150px; } .c160 { width: 160px; } .c124 { width: 124px; } .c120 { width: 121px; } .c118 { width: 119px; }
.chip { position: absolute; left: 6px; top: 6px; width: 10px; height: 10px; background: #000; }
.stroke { position: absolute; left: 4px; top: 11px; height: 1px; background: #000; }
.s60 { width: 60px; } .s35 { width: 35px; }

.workspace { position: relative; display: flex; flex: 1; min-height: 0; overflow: hidden; }
.canvas { position: relative; flex: 1; min-width: 0; background: #fff; overflow: hidden; }
.drawing { position: absolute; inset: 0; width: 100%; height: 100%; }
.viewcube { position: absolute; right: 13px; top: 12px; display: flex; flex-direction: column; align-items: center; gap: 18px; }
.compass text { font: 20px "Noto Sans CJK SC", sans-serif; text-anchor: middle; fill: #f8f8f8; stroke: #a4a4a4; stroke-width: 1px; }
.wcs { display: flex; align-items: center; gap: 4px; padding: 0 4px; border-radius: 4px; background: #e8eaf4; color: #999; font: 11px/17px "Liberation Sans", sans-serif; }
.navbar { position: absolute; right: 3px; top: 210px; width: 35px; height: 216px; border: 2px solid #c9c9cb; border-radius: 6px; background: rgba(243, 243, 243, .85); }

.dock { display: flex; align-items: flex-start; gap: 3px; flex: none; width: 116px; padding-left: 4px; background: #5c5c5c; }
.dockcol { display: flex; flex-direction: column; flex: none; width: 25px; }
.palette { display: flex; flex-direction: column; border: 1px solid #303030; }
.hgrip { height: 5px; margin: 2px 4px 1px; background: repeating-conic-gradient(#222 0 25%, #777 0 50%) 0 0 / 4px 4px; }
.hsep { height: 2px; margin: 2px; background: #eee; }
.w { fill: none; stroke: #e0e0e0; }
.b { fill: none; stroke: #73aef6; stroke-width: 1.3px; }
.r { fill: none; stroke: #ee2424; stroke-width: 1.3px; }
.k { fill: none; stroke: #345; }
.g { fill: #17b53a; stroke: #06350f; }
.n { fill: #78aef2; stroke: #173a74; }
.lt { fill: #ddd; stroke: #444; }
.lens { fill: #dce2ea; stroke: #555; stroke-width: .6px; }
.hd { stroke: #dce2ea; stroke-width: 2px; }

.overlay { position: absolute; inset: 0; width: 100%; height: 100%; pointer-events: none; }
.redline { filter: drop-shadow(2px 3px 3px rgba(0, 0, 0, .6)); }
.mark { fill: rgba(255, 255, 255, .75); stroke: rgba(205, 205, 205, .8); stroke-width: 1.5px; }
.bai { font: bold 62px "Liberation Sans", sans-serif; }
.du { font: bold 38px "Liberation Sans", sans-serif; }
.jy { font: 900 46px "Noto Sans CJK SC", sans-serif; }
.url { font: 32px "Noto Sans", sans-serif; }
```
